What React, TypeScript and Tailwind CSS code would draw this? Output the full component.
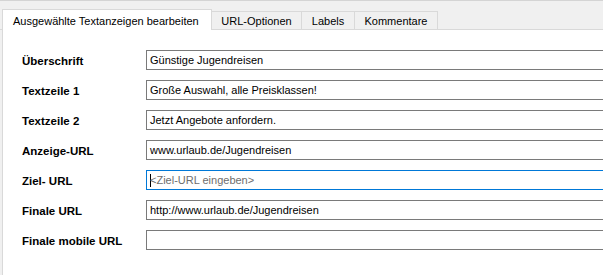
import React from "react";

const rows: { label: string; value: string; placeholder?: boolean; focused?: boolean }[] = [
  { label: "Überschrift", value: "Günstige Jugendreisen" },
  { label: "Textzeile 1", value: "Große Auswahl, alle Preisklassen!" },
  { label: "Textzeile 2", value: "Jetzt Angebote anfordern." },
  { label: "Anzeige-URL", value: "www.urlaub.de/Jugendreisen" },
  { label: "Ziel- URL", value: "<Ziel-URL eingeben>", placeholder: true, focused: true },
  { label: "Finale URL", value: "http://www.urlaub.de/Jugendreisen" },
  { label: "Finale mobile URL", value: "" },
];

export default function App() {
  return (
    <div
      className="w-[603px] h-[275px] overflow-hidden bg-[#f0f0f0] border-t border-[#d4d4d4] flex flex-col"
      style={{ fontFamily: '"Liberation Sans", Arial, sans-serif' }}
    >
      <div className="flex items-end h-[29px] border-b border-[#d9d9d9] pl-[2px] shrink-0">
        <div className="w-[210px] h-[21px] -mb-px bg-white border-l border-t border-r border-[#d9d9d9] text-[11px] text-black pl-[10px] pt-[4px] leading-[14px] whitespace-nowrap relative z-10">
          Ausgewählte Textanzeigen bearbeiten
        </div>
        <div className="w-[90px] h-[18px] border-t border-r border-[#d9d9d9] text-[11px] text-black flex items-center justify-center leading-[14px] pt-px whitespace-nowrap">
          URL-Optionen
        </div>
        <div className="w-[53px] h-[18px] border-t border-r border-[#d9d9d9] text-[11px] text-black flex items-center justify-center leading-[14px] pt-px whitespace-nowrap">
          Labels
        </div>
        <div className="w-[83px] h-[18px] border-t border-r border-[#d9d9d9] text-[11px] text-black flex items-center justify-center leading-[14px] pt-px whitespace-nowrap">
          Kommentare
        </div>
      </div>
      <div className="flex-1 ml-[2px] bg-white border-l border-[#d9d9d9] pt-[20px] pl-[19px] flex flex-col gap-[10px]">
        {rows.map((r) => (
          <div key={r.label} className="grid grid-cols-[124px_1fr] items-center h-[20px]">
            <div className="text-[11.5px] font-bold text-black leading-[14px] pt-px whitespace-nowrap">{r.label}</div>
            <div
              className={
                "h-[20px] w-[470px] border flex items-center pl-[3px] text-[11px] leading-[14px] whitespace-nowrap " +
                (r.focused ? "border-[#0078d7]" : "border-[#7a7a7a]")
              }
            >
              {r.focused && <span className="w-px h-[13px] bg-black mr-[-1px]" />}
              <span className={r.placeholder ? "text-[#6d6d6d]" : "text-black"}>{r.value}</span>
            </div>
          </div>
        ))}
      </div>
    </div>
  );
}
